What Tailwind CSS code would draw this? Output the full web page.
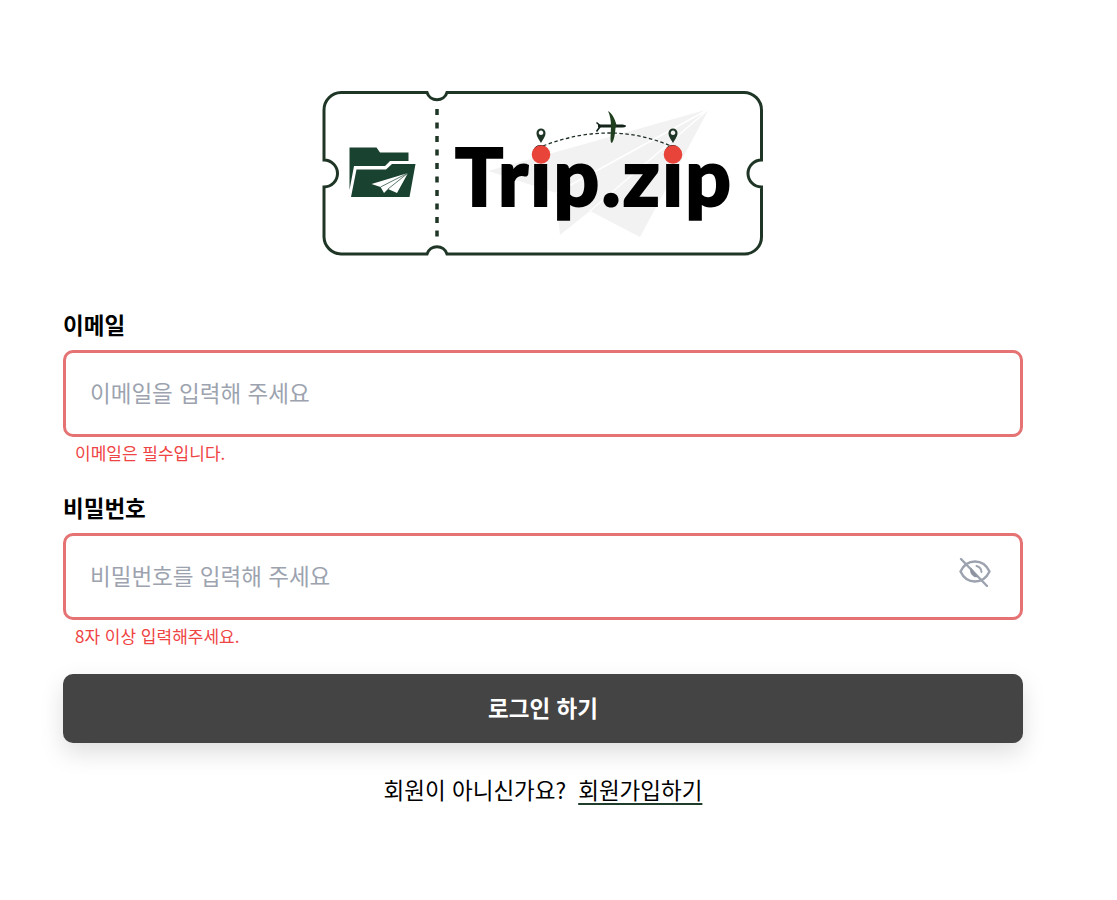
<!DOCTYPE html>
<html lang="ko">
<head>
  <meta charset="UTF-8">
  <title>Trip.zip</title>
  <script src="https://cdn.jsdelivr.net/npm/@tailwindcss/browser@4"></script>
</head>
<body class="bg-white min-h-screen font-['Noto_Sans_CJK_KR','Noto_Sans',sans-serif] text-black">
  <div class="w-[960px] ml-[63px] pt-[90px]">
    <div class="flex justify-center mb-[52px]">
      <svg class="block" width="442" height="167" viewBox="322 90 442 167" xmlns="http://www.w3.org/2000/svg">
        <!-- background plane -->
        <polygon points="709,109 488,171 556,193 560,235 590,211 640,237" fill="#f2f2f2"/>
        <path d="M709 109 L556 193 M709 109 L590 211" stroke="#fff" stroke-width="1.5" fill="none"/>
        <!-- ticket -->
        <path d="M341 92.5 H427 A10.5 10.5 0 0 0 447 92.5 H744 A17.5 17.5 0 0 1 761.5 110 V160 A13.5 13.5 0 0 0 761.5 187 V237 A17 17 0 0 1 744.5 254 H447 A10.5 10.5 0 0 0 427 254 H341 A17.5 17.5 0 0 1 324 237 V187 A13.5 13.5 0 0 0 324 160 V110 A17.5 17.5 0 0 1 341 92.5 Z" fill="none" stroke="#1f3626" stroke-width="3"/>
        <path d="M437 109 V240" stroke="#1f3626" stroke-width="3.5" stroke-dasharray="6 7.5"/>
        <!-- folder -->
        <path d="M349.5 147.5 H376.5 L380 152.5 H408.5 V161 H390 L385 166 H354 L349.5 190 Z" fill="#1a4231"/>
        <path d="M356.5 169.5 H386 L392 164 H415.5 L409.5 197 H351 Z" fill="#1a4231"/>
        <path d="M408 173 L371.5 184 L380.5 187 L384 193 L388 189 L397 193 Z" fill="#fff"/>
        <path d="M408 173 L380.5 187 M408 173 L388 189" stroke="#1a4231" stroke-width="0.7"/>
        <text x="455" y="206" font-family="Lato, sans-serif" font-weight="900" font-size="80" textLength="276" lengthAdjust="spacing" fill="#000" stroke="#000" stroke-width="2">Trip.zip</text>
        <!-- route -->
        <path d="M543 146 Q610 120 671 146" fill="none" stroke="#1f2f25" stroke-width="1.3" stroke-dasharray="3.5 2.5"/>
        <circle cx="541" cy="154.5" r="9.3" fill="#e8443a"/>
        <circle cx="673" cy="154.5" r="9.3" fill="#e8443a"/>
        <path d="M541 143 C538 138 536.5 136 536.5 133 A4.5 4.5 0 0 1 545.5 133 C545.5 136 544 138 541 143 Z M541 130.5 A2.3 2.3 0 1 0 541.01 130.5 Z" fill="#1f3626" fill-rule="evenodd"/>
        <path d="M673 143 C670 138 668.5 136 668.5 133 A4.5 4.5 0 0 1 677.5 133 C677.5 136 676 138 673 143 Z M673 130.5 A2.3 2.3 0 1 0 673.01 130.5 Z" fill="#1f3626" fill-rule="evenodd"/>
        <!-- plane -->
        <path d="M598 124.5 H620 C624 124.5 626 125 626 126 C626 127 624 127.5 620 127.5 H598 Z" fill="#14241a"/>
        <path d="M608 111 C612 113 615 119 616.5 125 L615.5 128 C615 135 614 140 612 143 C610 143 610.5 138 611 127 C611 120 610 115 608 111 Z" fill="#1f3f1f"/>
        <path d="M596.5 122.5 L600.5 126 L596.5 131.5" fill="none" stroke="#14241a" stroke-width="1.6"/>
      </svg>
    </div>

    <label class="block text-[22.5px] font-bold leading-[30px] mb-[11px]">이메일</label>
    <div class="h-[87px] border-[3px] border-[#e57373] rounded-[10px] flex items-center px-6">
      <input class="w-full outline-none mb-[2px] text-[22.5px] placeholder:text-[#9ca3af]" placeholder="이메일을 입력해 주세요">
    </div>
    <p class="text-[17px] leading-[24px] text-[#ef4444] pl-3 mt-[4px]">이메일은 필수입니다.</p>

    <label class="block text-[22.5px] font-bold leading-[30px] mt-[27px] mb-[11px]">비밀번호</label>
    <div class="h-[87px] border-[3px] border-[#e57373] rounded-[10px] flex items-center pl-6 pr-[29px]">
      <input class="w-full outline-none mb-[2px] text-[22.5px] placeholder:text-[#9ca3af]" placeholder="비밀번호를 입력해 주세요">
      <svg class="shrink-0 mb-[10px]" width="32" height="32" viewBox="0 0 32 32" fill="none" stroke="#9ca3af" stroke-width="2.4" stroke-linecap="round">
        <path d="M1.5 15.5 C5 8 10.5 5.5 16 5.5 C21.5 5.5 27 8 30.5 15.5 C27 23 21.5 25.5 16 25.5 C10.5 25.5 5 23 1.5 15.5 Z"/>
        <path d="M2 3 L28 30"/>
        <path d="M12 11.5 A6.5 6.5 0 0 0 19 21 Z" fill="#8d94a0" stroke="none"/>
        <path d="M17.5 10 A6.5 6.5 0 0 1 22.5 16" stroke-width="2"/>
      </svg>
    </div>
    <p class="text-[17px] leading-[24px] text-[#ef4444] pl-3 mt-[4px]">8자 이상 입력해주세요.</p>

    <button class="block w-full h-[69px] mt-[26px] pb-[2px] rounded-[10px] bg-[#444444] text-white text-[22.5px] font-bold shadow-[0_10px_25px_rgba(0,0,0,0.13)]">로그인 하기</button>

    <p class="mt-[30px] text-center text-[22.5px] leading-[32px]">회원이 아니신가요?<a class="underline decoration-2 underline-offset-[4px] decoration-[#1f3d2b] ml-3" href="#">회원가입하기</a></p>
  </div>
</body>
</html>
